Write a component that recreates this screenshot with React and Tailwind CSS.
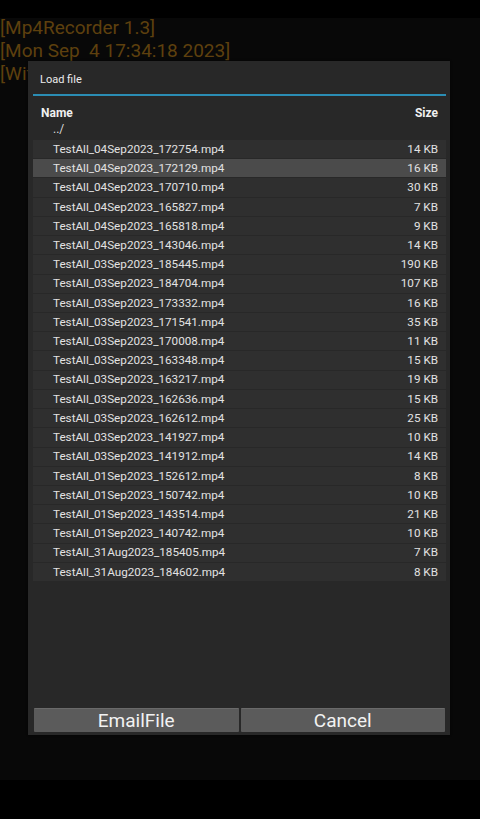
const files = [
  ['TestAll_04Sep2023_172754.mp4', '14 KB'],
  ['TestAll_04Sep2023_172129.mp4', '16 KB'],
  ['TestAll_04Sep2023_170710.mp4', '30 KB'],
  ['TestAll_04Sep2023_165827.mp4', '7 KB'],
  ['TestAll_04Sep2023_165818.mp4', '9 KB'],
  ['TestAll_04Sep2023_143046.mp4', '14 KB'],
  ['TestAll_03Sep2023_185445.mp4', '190 KB'],
  ['TestAll_03Sep2023_184704.mp4', '107 KB'],
  ['TestAll_03Sep2023_173332.mp4', '16 KB'],
  ['TestAll_03Sep2023_171541.mp4', '35 KB'],
  ['TestAll_03Sep2023_170008.mp4', '11 KB'],
  ['TestAll_03Sep2023_163348.mp4', '15 KB'],
  ['TestAll_03Sep2023_163217.mp4', '19 KB'],
  ['TestAll_03Sep2023_162636.mp4', '15 KB'],
  ['TestAll_03Sep2023_162612.mp4', '25 KB'],
  ['TestAll_03Sep2023_141927.mp4', '10 KB'],
  ['TestAll_03Sep2023_141912.mp4', '14 KB'],
  ['TestAll_01Sep2023_152612.mp4', '8 KB'],
  ['TestAll_01Sep2023_150742.mp4', '10 KB'],
  ['TestAll_01Sep2023_143514.mp4', '21 KB'],
  ['TestAll_01Sep2023_140742.mp4', '10 KB'],
  ['TestAll_31Aug2023_185405.mp4', '7 KB'],
  ['TestAll_31Aug2023_184602.mp4', '8 KB'],
];

export default function App() {
  return (
    <div className="w-[480px] h-[819px] bg-black flex flex-col font-['Roboto',sans-serif]">
      <div className="h-[18px] shrink-0" />

      {/* log area with the dialog on top */}
      <div className="relative h-[762px] shrink-0 bg-[#080808] overflow-hidden">
        <div className="text-[19px] leading-[19px] text-[#5e400e]">
          <div className="h-[23px]">[Mp4Recorder 1.3]</div>
          <div className="h-[23px] whitespace-pre">[Mon Sep  4 17:34:18 2023]</div>
          <div className="h-[23px]">[WifiLock acquired]</div>
        </div>

        <div className="absolute left-[28px] top-[43px] w-[422px] h-[674px] bg-[#282828] flex flex-col shadow-[0_0_2px_rgba(0,0,0,0.6)]">
          <div className="h-[33px] shrink-0 pt-[12px] pl-[12px] leading-[14px] text-[11px] text-[#ececec]">
            Load file
          </div>
          <div className="h-[2px] ml-[5px] mr-[4px] bg-[#2b8db4]" />

          <div className="flex justify-between pl-[13px] pr-[12px] pt-[10px] leading-[14px] text-[12px] font-bold text-[#f0f0f0]">
            <span>Name</span>
            <span>Size</span>
          </div>
          <div className="pl-[25px] mt-[2px] leading-[14px] text-[12px] text-[#dcdcdc]">../</div>

          <div className="mt-[4px] ml-[5px] mr-[4px] flex flex-col gap-[1px] flex-1">
            {files.map(([name, size], i) => (
              <div
                key={name}
                className={
                  'h-[18.23px] flex items-center justify-between pl-[20px] pr-[8px] pt-[1px] text-[11.7px] text-[#e2e2e2] ' +
                  (i === 1 ? 'bg-[#4b4b4b]' : 'bg-[#2f2f2f]')
                }
              >
                <span>{name}</span>
                <span>{size}</span>
              </div>
            ))}
          </div>

          <div className="flex gap-[2px] ml-[6px] mr-[5px] mb-[3px]">
            <button className="flex-1 h-[24px] bg-[#5b5b5b] border-t border-[#6a6a6a] text-[19px] leading-[22px] text-[#f2f2f2] rounded-[1px]">
              EmailFile
            </button>
            <button className="flex-1 h-[24px] bg-[#5b5b5b] border-t border-[#6a6a6a] text-[19px] leading-[22px] text-[#f2f2f2] rounded-[1px]">
              Cancel
            </button>
          </div>
        </div>
      </div>

      <div className="flex-1" />
    </div>
  );
}
